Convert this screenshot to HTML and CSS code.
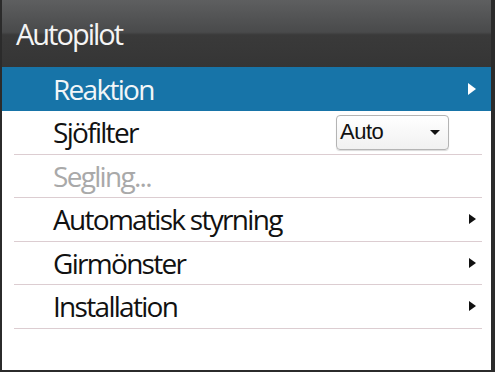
FILE: index.html
```html
<!DOCTYPE html>
<html lang="sv">
<head>
  <meta charset="UTF-8">
  <title>Autopilot</title>
  <link rel="stylesheet" href="styles.css">
</head>
<body>

  <div class="panel">
    <!-- Titelrad -->
    <div class="title">Autopilot</div>

    <!-- Menyrader -->
    <div class="row active">
      <span>Reaktion</span>
      <span class="arrow"></span>
    </div>
    <div class="row">
      <span>Sjöfilter</span>
      <div class="select">
        <span>Auto</span>
        <span class="caret"></span>
      </div>
    </div>
    <div class="row disabled">
      <span>Segling...</span>
    </div>
    <div class="row">
      <span>Automatisk styrning</span>
      <span class="arrow"></span>
    </div>
    <div class="row">
      <span>Girmönster</span>
      <span class="arrow"></span>
    </div>
    <div class="row">
      <span>Installation</span>
      <span class="arrow"></span>
    </div>
  </div>

</body>
</html>
```

FILE: styles.css
```css
/* Sidan */
body {
  margin: 0;
  font-family: 'Open Sans', sans-serif;
  background-color: #fff;
}

/* Ram runt menyn */
.panel {
  width: 495px;
  height: 372px;
  box-sizing: border-box;
  border: 2px solid #2b2b2b;
  border-top: none;
  border-right-width: 4px;
  background-color: #fff;
}

/* Titelrad */
.title {
  height: 67px;
  box-sizing: border-box;
  padding: 14px 0 0 14px;
  background: linear-gradient(#5e5f60 0%, #494a4b 48%, #3a3a3a 52%, #353535 100%);
  color: #f4f4f4;
  font-size: 29px;
  font-weight: 500;
  letter-spacing: -2px;
  line-height: 40px;
}

/* Rader */
.row {
  display: flex;
  align-items: center;
  justify-content: space-between;
  height: 43.5px;
  box-sizing: border-box;
  margin: 0 9px 0 12px;
  padding: 0 6px 0 39px;
  border-bottom: 1px solid #dccdd1;
  color: #111;
  font-size: 28px;
  font-weight: 500;
  letter-spacing: -1.7px;
  line-height: 40px;
}

.row.active {
  height: 44px;
  margin: 0;
  padding: 0 15px 0 51px;
  border-bottom: none;
  background-color: #1774a8;
  color: #f2f6f8;
}

.row.disabled {
  color: #a9a9a9;
}

/* Pilar */
.arrow {
  width: 0;
  height: 0;
  border-top: 5.5px solid transparent;
  border-bottom: 5.5px solid transparent;
  border-left: 7px solid #111;
}

.active .arrow {
  border-top-width: 6px;
  border-bottom-width: 6px;
  border-left: 8px solid #fff;
}

/* Rullgardin */
.select {
  display: flex;
  align-items: center;
  justify-content: space-between;
  width: 113px;
  height: 35px;
  box-sizing: border-box;
  margin-right: 27px;
  padding: 0 8px 0 3px;
  border: 1px solid #b4b4b4;
  border-radius: 4px;
  background: linear-gradient(#fff, #f1f1f1);
  box-shadow: 0 1px 1px rgba(0,0,0,0.15);
  font-family: 'Liberation Sans', sans-serif;
  font-size: 22px;
  font-weight: 400;
  letter-spacing: -0.5px;
  color: #111;
}

.caret {
  width: 0;
  height: 0;
  border-left: 5px solid transparent;
  border-right: 5px solid transparent;
  border-top: 5px solid #111;
}
```
